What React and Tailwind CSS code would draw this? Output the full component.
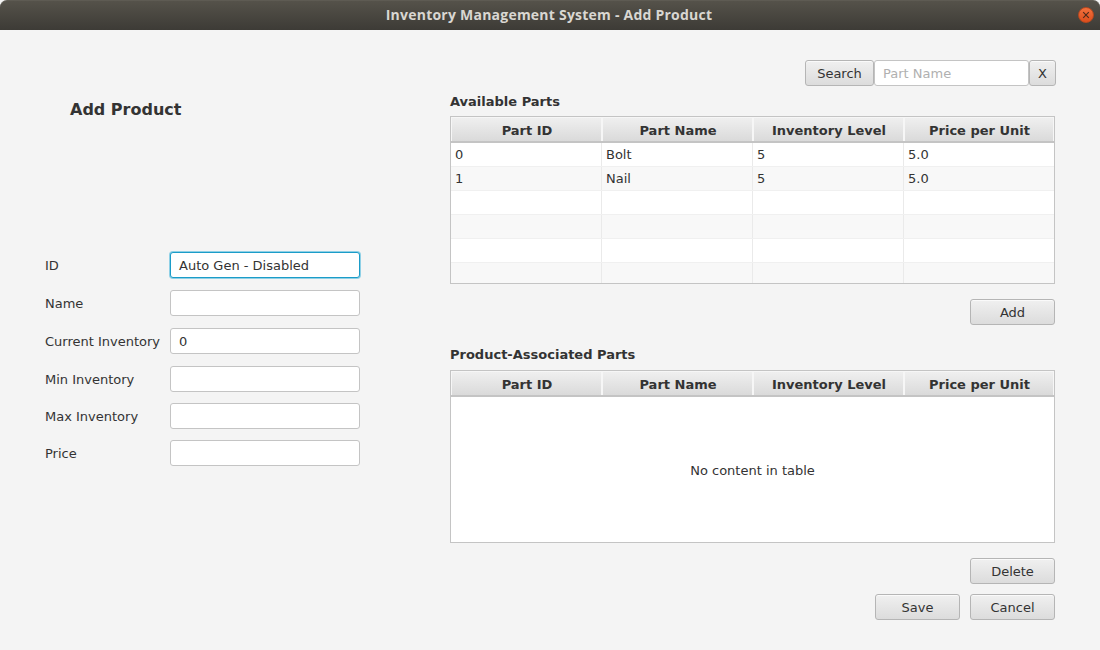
const font = { fontFamily: '"DejaVu Sans", sans-serif' };
const cols = ["Part ID", "Part Name", "Inventory Level", "Price per Unit"];
const rows = [["0", "Bolt", "5", "5.0"], ["1", "Nail", "5", "5.0"], ["", "", "", ""], ["", "", "", ""], ["", "", "", ""], ["", "", "", ""]];

function Btn({ children, className = "" }) {
  return (
    <button className={`h-[26px] rounded-[3px] border border-[#b5b5b5] bg-gradient-to-b from-[#f0f0f0] to-[#dcdcdc] text-[13px] leading-none text-[#333] shadow-[inset_0_1px_0_#fafafa] ${className}`}>
      {children}
    </button>
  );
}

function Header() {
  return (
    <div className="grid h-[26px] shrink-0 grid-cols-[151px_151px_151px_1fr] border-b-2 border-[#c4c4c4] bg-gradient-to-b from-[#f0f0f0] to-[#dadada]">
      {cols.map((c) => (
        <div key={c} className="flex items-center justify-center pl-px pt-[3px] text-[13px] font-bold text-[#333] shadow-[inset_1px_1px_0_#f6f6f6,inset_-1px_0_0_#f6f6f6]">{c}</div>
      ))}
    </div>
  );
}

function Field({ label, value = "", focus = false, className = "" }) {
  return (
    <div className={`flex h-[26px] items-center ${className}`}>
      <div className="w-[125px] pt-[2px] text-[13px] text-[#333]">{label}</div>
      <div className={`flex h-[26px] w-[190px] items-center rounded-[3px] bg-white pl-[8px] pt-px text-[13px] text-[#333] ${focus ? "border border-[#1b9cc8] shadow-[0_0_0_1px_#8fd0e6]" : "border border-[#c4c4c4]"}`}>{value}</div>
    </div>
  );
}

export default function App() {
  return (
    <div className="flex h-[650px] w-[1100px] flex-col overflow-hidden bg-[#f4f4f4]" style={font}>
      <div className="relative flex h-[30px] shrink-0 items-center justify-center rounded-t-[7px] border-t border-[#5e5b53] bg-gradient-to-b from-[#55524a] to-[#3d3b36] pb-[2px] pr-[2px]">
        <span className="text-[14px] font-bold tracking-[0.23px] text-[#d9d7d2]" style={{ fontFamily: '"Open Sans", "Noto Sans", sans-serif' }}>Inventory Management System - Add Product</span>
        <div className="absolute right-[6px] top-[6px] flex h-[16px] w-[16px] items-center justify-center rounded-full border border-[#b8481f] bg-gradient-to-b from-[#f2703c] to-[#dc4e1c]">
          <svg width="8" height="8" viewBox="0 0 8 8"><path d="M1.2 1.2 6.8 6.8M6.8 1.2 1.2 6.8" stroke="#4a2a1c" strokeWidth="1.1" /></svg>
        </div>
      </div>

      <div className="flex min-h-0 flex-1">
        <div className="w-[450px] shrink-0 pl-[45px]">
          <div className="ml-[25px] mt-[70px] text-[16px] font-bold leading-5 text-[#333]">Add Product</div>
          <div className="mt-[132px]">
            <Field label="ID" value="Auto Gen - Disabled" focus />
            <Field label="Name" className="mt-[12px]" />
            <Field label="Current Inventory" value="0" className="mt-[12px]" />
            <Field label="Min Inventory" className="mt-[12px]" />
            <Field label="Max Inventory" className="mt-[11px]" />
            <Field label="Price" className="mt-[11px]" />
          </div>
        </div>

        <div className="w-[605px] shrink-0 pt-[30px]">
          <div className="flex h-[26px] justify-end">
            <Btn className="w-[69px]">Search</Btn>
            <div className="flex h-[26px] w-[155px] items-center rounded-[3px] border border-[#c4c4c4] bg-white pl-[8px] pt-px text-[13px] text-[#b0b0b0]">Part Name</div>
            <Btn className="mr-[-1px] w-[27px]">X</Btn>
          </div>
          <div className="mt-[8px] text-[13px] font-bold leading-4 text-[#333]">Available Parts</div>
          <div className="mt-[6px] h-[168px] overflow-hidden border border-[#c4c4c4] bg-white">
            <Header />
            {rows.map((r, i) => (
              <div key={i} className={`grid h-[24px] grid-cols-[151px_151px_151px_1fr] border-b border-[#f0f0f0] ${i % 2 ? "bg-[#f8f8f8]" : "bg-white"}`}>
                {r.map((v, j) => (
                  <div key={j} className={`flex items-center pl-[4px] text-[13px] text-[#333] ${j < 3 ? "border-r border-[#eaeaea]" : ""}`}>{v}</div>
                ))}
              </div>
            ))}
          </div>
          <div className="mt-[15px] flex justify-end">
            <Btn className="w-[85px]">Add</Btn>
          </div>
          <div className="mt-[22px] text-[13px] font-bold leading-4 text-[#333]">Product-Associated Parts</div>
          <div className="mt-[7px] flex h-[173px] flex-col border border-[#c4c4c4] bg-white">
            <Header />
            <div className="flex flex-1 items-center justify-center pt-[3px] text-[13px] text-[#333]">No content in table</div>
          </div>
          <div className="mt-[15px] flex justify-end">
            <Btn className="w-[85px]">Delete</Btn>
          </div>
          <div className="mt-[10px] flex justify-end gap-[10px]">
            <Btn className="w-[85px]">Save</Btn>
            <Btn className="w-[85px]">Cancel</Btn>
          </div>
        </div>
      </div>
    </div>
  );
}
